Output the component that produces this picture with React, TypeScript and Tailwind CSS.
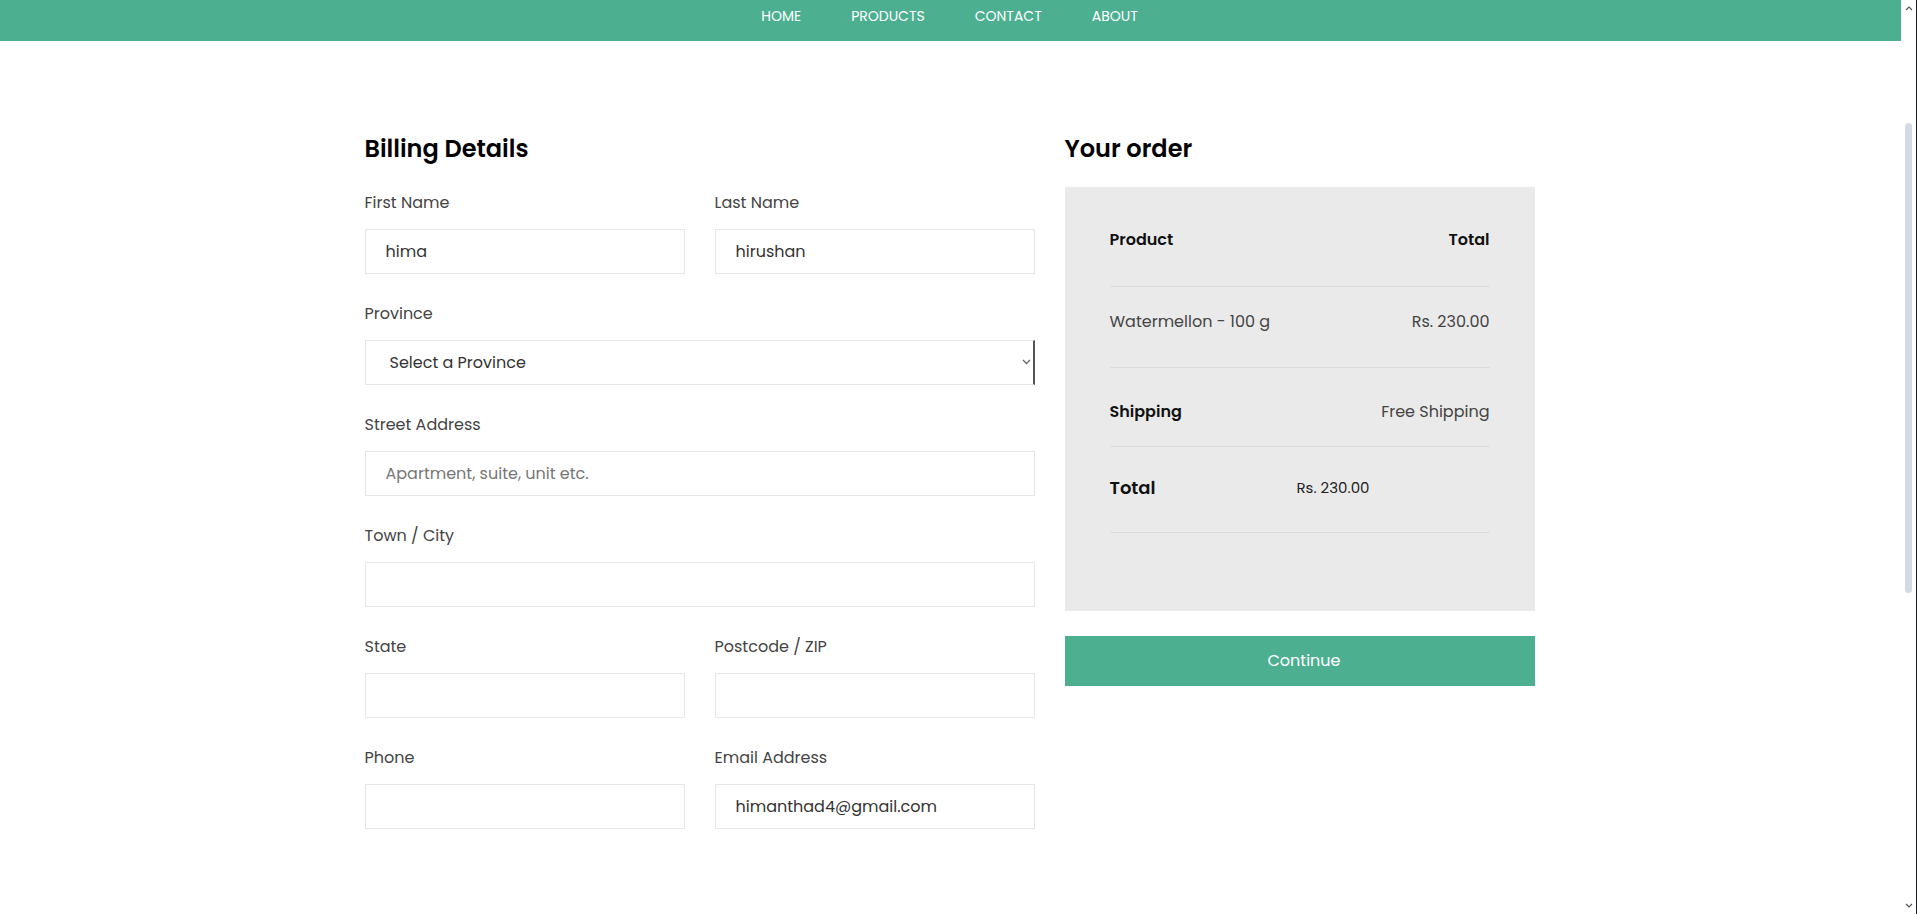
import React from 'react';

const navLinks = ['Home', 'Products', 'Contact', 'About'];

const Label = ({ children }: { children: React.ReactNode }) => (
  <label className="block text-[16px] leading-[24px] text-[#444] mb-[14px]">{children}</label>
);

const Field = ({ label, value, placeholder }: { label: string; value?: string; placeholder?: string }) => (
  <div>
    <Label>{label}</Label>
    <input
      type="text"
      defaultValue={value}
      placeholder={placeholder}
      className="block w-full h-[45px] border border-[#e6e6e6] pl-[20px] pr-[19px] text-[16px] text-[#333] placeholder:text-[#777] outline-none bg-white"
    />
  </div>
);

// window scrollbar as seen in the screenshot
const ScrollBar = () => (
  <div className="w-[16px] h-full bg-white border-r border-[#1d1f2b] flex flex-col items-center">
    <svg className="mt-[6px]" width="8" height="5" viewBox="0 0 8 5" fill="none">
      <path d="M1 4l3-3 3 3" stroke="#555" strokeWidth="1.2" />
    </svg>
    <div className="flex-1 w-full flex justify-center">
      <div className="mt-[112px] h-[470px] w-[7px] rounded-full bg-[#d2dae2]" />
    </div>
    <svg className="mb-[6px]" width="8" height="5" viewBox="0 0 8 5" fill="none">
      <path d="M1 1l3 3 3-3" stroke="#555" strokeWidth="1.2" />
    </svg>
  </div>
);

const App: React.FC = () => {
  return (
    <div className="flex h-screen overflow-hidden bg-white font-[Poppins,Inter,sans-serif]">
      <div className="flex-1 min-w-0">
        {/* Top nav */}
        <nav className="h-[41px] bg-[#4caf90] flex justify-center gap-[50px] pt-[7px] pr-[2px]">
          {navLinks.map((link) => (
            <a key={link} href="#" className="text-[14px] leading-[18px] text-white uppercase">
              {link}
            </a>
          ))}
        </nav>

        <main className="mx-auto w-[1200px] px-[15px] pt-[93px] flex gap-[30px] -translate-x-px">
          {/* Billing form */}
          <section className="w-[670px]">
            <h2 className="text-[24px] leading-[29px] font-semibold text-black mb-[28px]">Billing Details</h2>

            <div className="grid grid-cols-2 gap-x-[30px] mb-[28px]">
              <Field label="First Name" value="hima" />
              <Field label="Last Name" value="hirushan" />
            </div>

            <div className="mb-[28px]">
              <Label>Province</Label>
              <div className="relative">
                <select className="block w-full h-[45px] appearance-none border border-[#e6e6e6] border-r-2 border-r-[#555] pl-[24px] text-[16px] text-[#333] bg-white outline-none">
                  <option>Select a Province</option>
                  <option>Western</option>
                  <option>Central</option>
                  <option>Southern</option>
                </select>
                <svg className="absolute right-[4px] top-[19px] pointer-events-none" width="9" height="6" viewBox="0 0 9 6" fill="none">
                  <path d="M1 1l3.5 3.5L8 1" stroke="#666" strokeWidth="1.3" />
                </svg>
              </div>
            </div>

            <div className="mb-[28px]">
              <Field label="Street Address" placeholder="Apartment, suite, unit etc." />
            </div>

            <div className="mb-[28px]">
              <Field label="Town / City" />
            </div>

            <div className="grid grid-cols-2 gap-x-[30px] mb-[28px]">
              <Field label="State" />
              <Field label="Postcode / ZIP" />
            </div>

            <div className="grid grid-cols-2 gap-x-[30px]">
              <Field label="Phone" />
              <Field label="Email Address" value="himanthad4@gmail.com" />
            </div>
          </section>

          {/* Order summary */}
          <aside className="w-[470px]">
            <h2 className="text-[24px] leading-[29px] font-semibold text-black mb-[24px]">Your order</h2>

            <div className="bg-[#eaeaea] pt-[41px] px-[45px] pb-[78px]">
              <div className="flex justify-between text-[16px] leading-[24px] font-semibold text-[#111] pb-[34px] border-b border-[#dcdcdc]">
                <span>Product</span>
                <span>Total</span>
              </div>
              <div className="flex justify-between text-[16px] leading-[24px] text-[#444] pt-[23px] pb-[33px] border-b border-[#dcdcdc]">
                <span>Watermellon - 100 g</span>
                <span>Rs. 230.00</span>
              </div>
              <div className="flex justify-between text-[16px] leading-[24px] pt-[32px] pb-[22px] border-b border-[#dcdcdc]">
                <span className="font-semibold text-[#111]">Shipping</span>
                <span className="text-[#444]">Free Shipping</span>
              </div>
              <div className="grid grid-cols-2 items-center leading-[24px] pt-[29px] pb-[32px] border-b border-[#dcdcdc]">
                <span className="text-[18px] font-semibold text-[#111]">Total</span>
                <span className="text-[15px] text-[#222] -ml-[3px]">Rs. 230.00</span>
              </div>
            </div>

            <button className="mt-[25px] h-[50px] w-full bg-[#4caf90] text-white text-[16px] pl-[9px]">Continue</button>
          </aside>
        </main>
      </div>
      <ScrollBar />
    </div>
  );
};

export default App;
